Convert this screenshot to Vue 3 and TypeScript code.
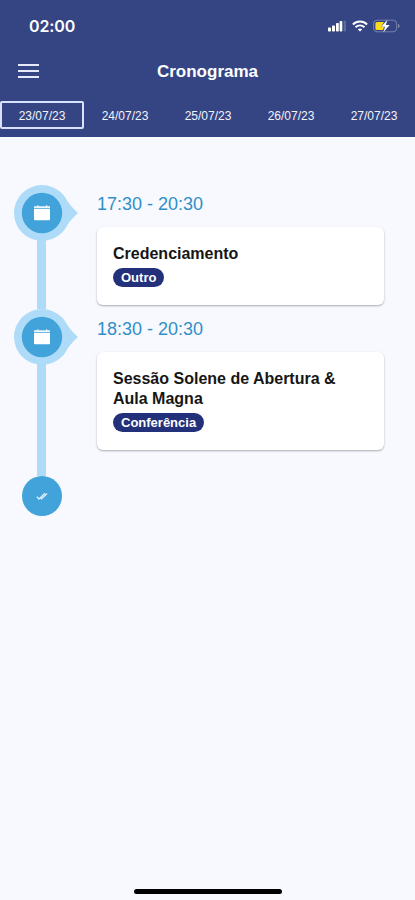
<script setup lang="ts">
interface Session {
  time: string
  title: string
  kind: string
}

const days: string[] = ['23/07/23', '24/07/23', '25/07/23', '26/07/23', '27/07/23']
const selected = days[0]

const sessions: Session[] = [
  { time: '17:30 - 20:30', title: 'Credenciamento', kind: 'Outro' },
  { time: '18:30 - 20:30', title: 'Sessão Solene de Abertura & Aula Magna', kind: 'Conferência' },
]
</script>

<template>
  <div class="screen">
    <header class="header">
      <div class="status">
        <span class="clock">02:00</span>
        <div class="indicators">
          <svg class="signal" width="18" height="12" viewBox="0 0 18 12">
            <rect x="0" y="7.5" width="3" height="4" rx="0.8" fill="#fff" />
            <rect x="4" y="5.5" width="3" height="6" rx="0.8" fill="#fff" />
            <rect x="8" y="3" width="2.8" height="8.5" rx="0.8" fill="#fff" />
            <rect x="11.6" y="1" width="2.7" height="10.5" rx="0.8" fill="#fff" />
            <rect x="15.6" y="0.5" width="2.4" height="11" rx="0.8" fill="#fff" opacity="0.2" />
          </svg>
          <svg class="wifi" width="16" height="12" viewBox="0 0 16 12" fill="none" stroke="#fff">
            <path d="M0.9 4.4a10.3 10.3 0 0 1 14.2 0" stroke-width="2.1" />
            <path d="M3.5 7.2a6.5 6.5 0 0 1 9 0" stroke-width="1.9" />
            <path d="M8 11.6 5.8 9.4a3.3 3.3 0 0 1 4.4 0z" fill="#fff" stroke="none" />
          </svg>
          <svg class="battery" width="27" height="14" viewBox="0 0 27 14">
            <rect x="0.6" y="1.2" width="23" height="11.6" rx="3.4" fill="none" stroke="#fff" stroke-opacity="0.32" />
            <path d="M25 5v4c1-.4 1.5-1.1 1.5-2S26 5.4 25 5z" fill="#fff" opacity="0.4" />
            <path d="M4 3h7l-3 5h3l-1 3H4a1.6 1.6 0 0 1-1.6-1.6V4.600A1.6 1.6 0 0 1 4 3z" fill="#fbdc1c" />
            <path d="M14.4 0.8 8.2 7.8h3.8L10.3 13.2l6.4-7.3h-3.900z" fill="#fff" />
          </svg>
        </div>
      </div>
      <div class="toolbar">
        <button class="menu" aria-label="Menu"><i /><i /><i /></button>
        <h1>Cronograma</h1>
      </div>
      <nav class="days">
        <button v-for="day in days" :key="day" class="day" :class="{ active: day === selected }">{{ day }}</button>
      </nav>
    </header>

    <main class="timeline">
      <section v-for="s in sessions" :key="s.time" class="entry">
        <div class="rail">
          <svg class="marker" width="64" height="56" viewBox="0 0 64 56">
            <path d="M49 9.500Q55 20 64 28Q55 36 49 46.500z" fill="#aedcf8" />
            <circle cx="28" cy="28" r="28" fill="#aedcf8" />
            <circle cx="28" cy="28" r="20.2" fill="#41a3da" />
            <path d="M21 21.3h2.3v-1.1h1.2v1.1h7.5v-1.1h1.2v1.1H36v1.8H20v-1.8z" fill="#fff" fill-opacity="0.9" />
            <path d="M20 23.8h16v10.4q0 1-1 1H21q-1 0-1-1z" fill="#fff" />
          </svg>
          <span class="line" />
        </div>
        <div class="body">
          <time>{{ s.time }}</time>
          <article class="card">
            <h2>{{ s.title }}</h2>
            <span class="tag">{{ s.kind }}</span>
          </article>
        </div>
      </section>
      <div class="end">
        <svg width="12" height="9" viewBox="0 0 12 9" fill="none" stroke="#d9effb" stroke-width="1.4">
          <path d="M0.8 4.7 3 7 9 1.3" />
          <path d="M4.5 5.7 5.6 6.8 11 1.4" />
        </svg>
      </div>
    </main>
    <div class="home" />
  </div>
</template>

<style>
body {
  margin: 0;
  background: #f7f9ff;
}
</style>

<style scoped>
.screen {
  display: flex;
  flex-direction: column;
  box-sizing: border-box;
  width: 415px;
  height: 900px;
  overflow: hidden;
  background: #f7f9ff;
  font-family: 'Liberation Sans', Arial, sans-serif;
}
button {
  margin: 0;
  padding: 0;
  border: 0;
  background: none;
  font-family: inherit;
}
.header {
  flex: none;
  height: 137px;
  background: #354584;
  color: #fff;
}
.status {
  display: flex;
  align-items: center;
  justify-content: space-between;
  height: 51px;
  padding: 0 15px 0 29px;
}
.clock {
  font: 600 16px/20px Inter, sans-serif;
  letter-spacing: -0.1px;
}
.indicators {
  display: flex;
  align-items: center;
  gap: 6px;
}
.indicators svg {
  display: block;
}
.wifi {
  margin-right: -1px;
}
.toolbar {
  display: grid;
  grid-template-columns: 60px 1fr 60px;
  align-items: center;
  height: 40px;
}
.menu {
  display: flex;
  flex-direction: column;
  gap: 4px;
  width: 21px;
  margin-left: 18px;
}
.menu i {
  height: 2px;
  background: #e6e9fa;
}
h1 {
  margin: 0;
  padding-top: 2px;
  font-size: 17px;
  line-height: 20px;
  text-align: center;
}
.days {
  display: grid;
  grid-template-columns: repeat(5, 1fr);
  margin-top: 10px;
}
.day {
  box-sizing: border-box;
  height: 28px;
  margin: 0 -1px 0 0;
  padding-top: 1px;
  border: 2px solid transparent;
  border-radius: 2px;
  color: #f3f4fb;
  font-size: 12px;
  line-height: 24px;
}
.day.active {
  border-color: #d9e2fb;
}
.timeline {
  padding: 48px 31px 0 14px;
}
.entry {
  display: flex;
  gap: 19px;
}
.rail {
  display: flex;
  flex-direction: column;
  width: 64px;
}
.marker {
  display: block;
  flex: none;
}
.line {
  flex: 1;
  width: 9.500px;
  margin: -2px 0 0 22.500px;
  background: #aedcf8;
}
.body {
  flex: 1;
  padding: 8px 0 4px;
}
.entry:nth-child(2) .body {
  padding: 9px 0 26px;
}
time {
  display: block;
  margin-bottom: 12px;
  color: #318fc7;
  font-size: 18px;
  line-height: 22px;
}
.card {
  box-sizing: border-box;
  padding: 17px 40px 18px 16px;
  border-radius: 6px;
  background: #fff;
  box-shadow: 0 1px 2px rgba(40, 30, 40, 0.36);
}
h2 {
  margin: 0 0 4px;
  color: #161616;
  font-size: 16px;
  line-height: 20px;
}
.tag {
  display: block;
  width: fit-content;
  padding: 0 8px;
  border-radius: 10px;
  background: #22317a;
  color: #fff;
  font-size: 13px;
  font-weight: 700;
  line-height: 19px;
}
.end {
  display: flex;
  align-items: center;
  justify-content: center;
  width: 40px;
  height: 40px;
  margin-left: 7.500px;
  border-radius: 50%;
  background: #41a3da;
}
.home {
  width: 148px;
  height: 5px;
  margin: auto auto 6px 134px;
  border-radius: 3px;
  background: #000;
}
</style>
